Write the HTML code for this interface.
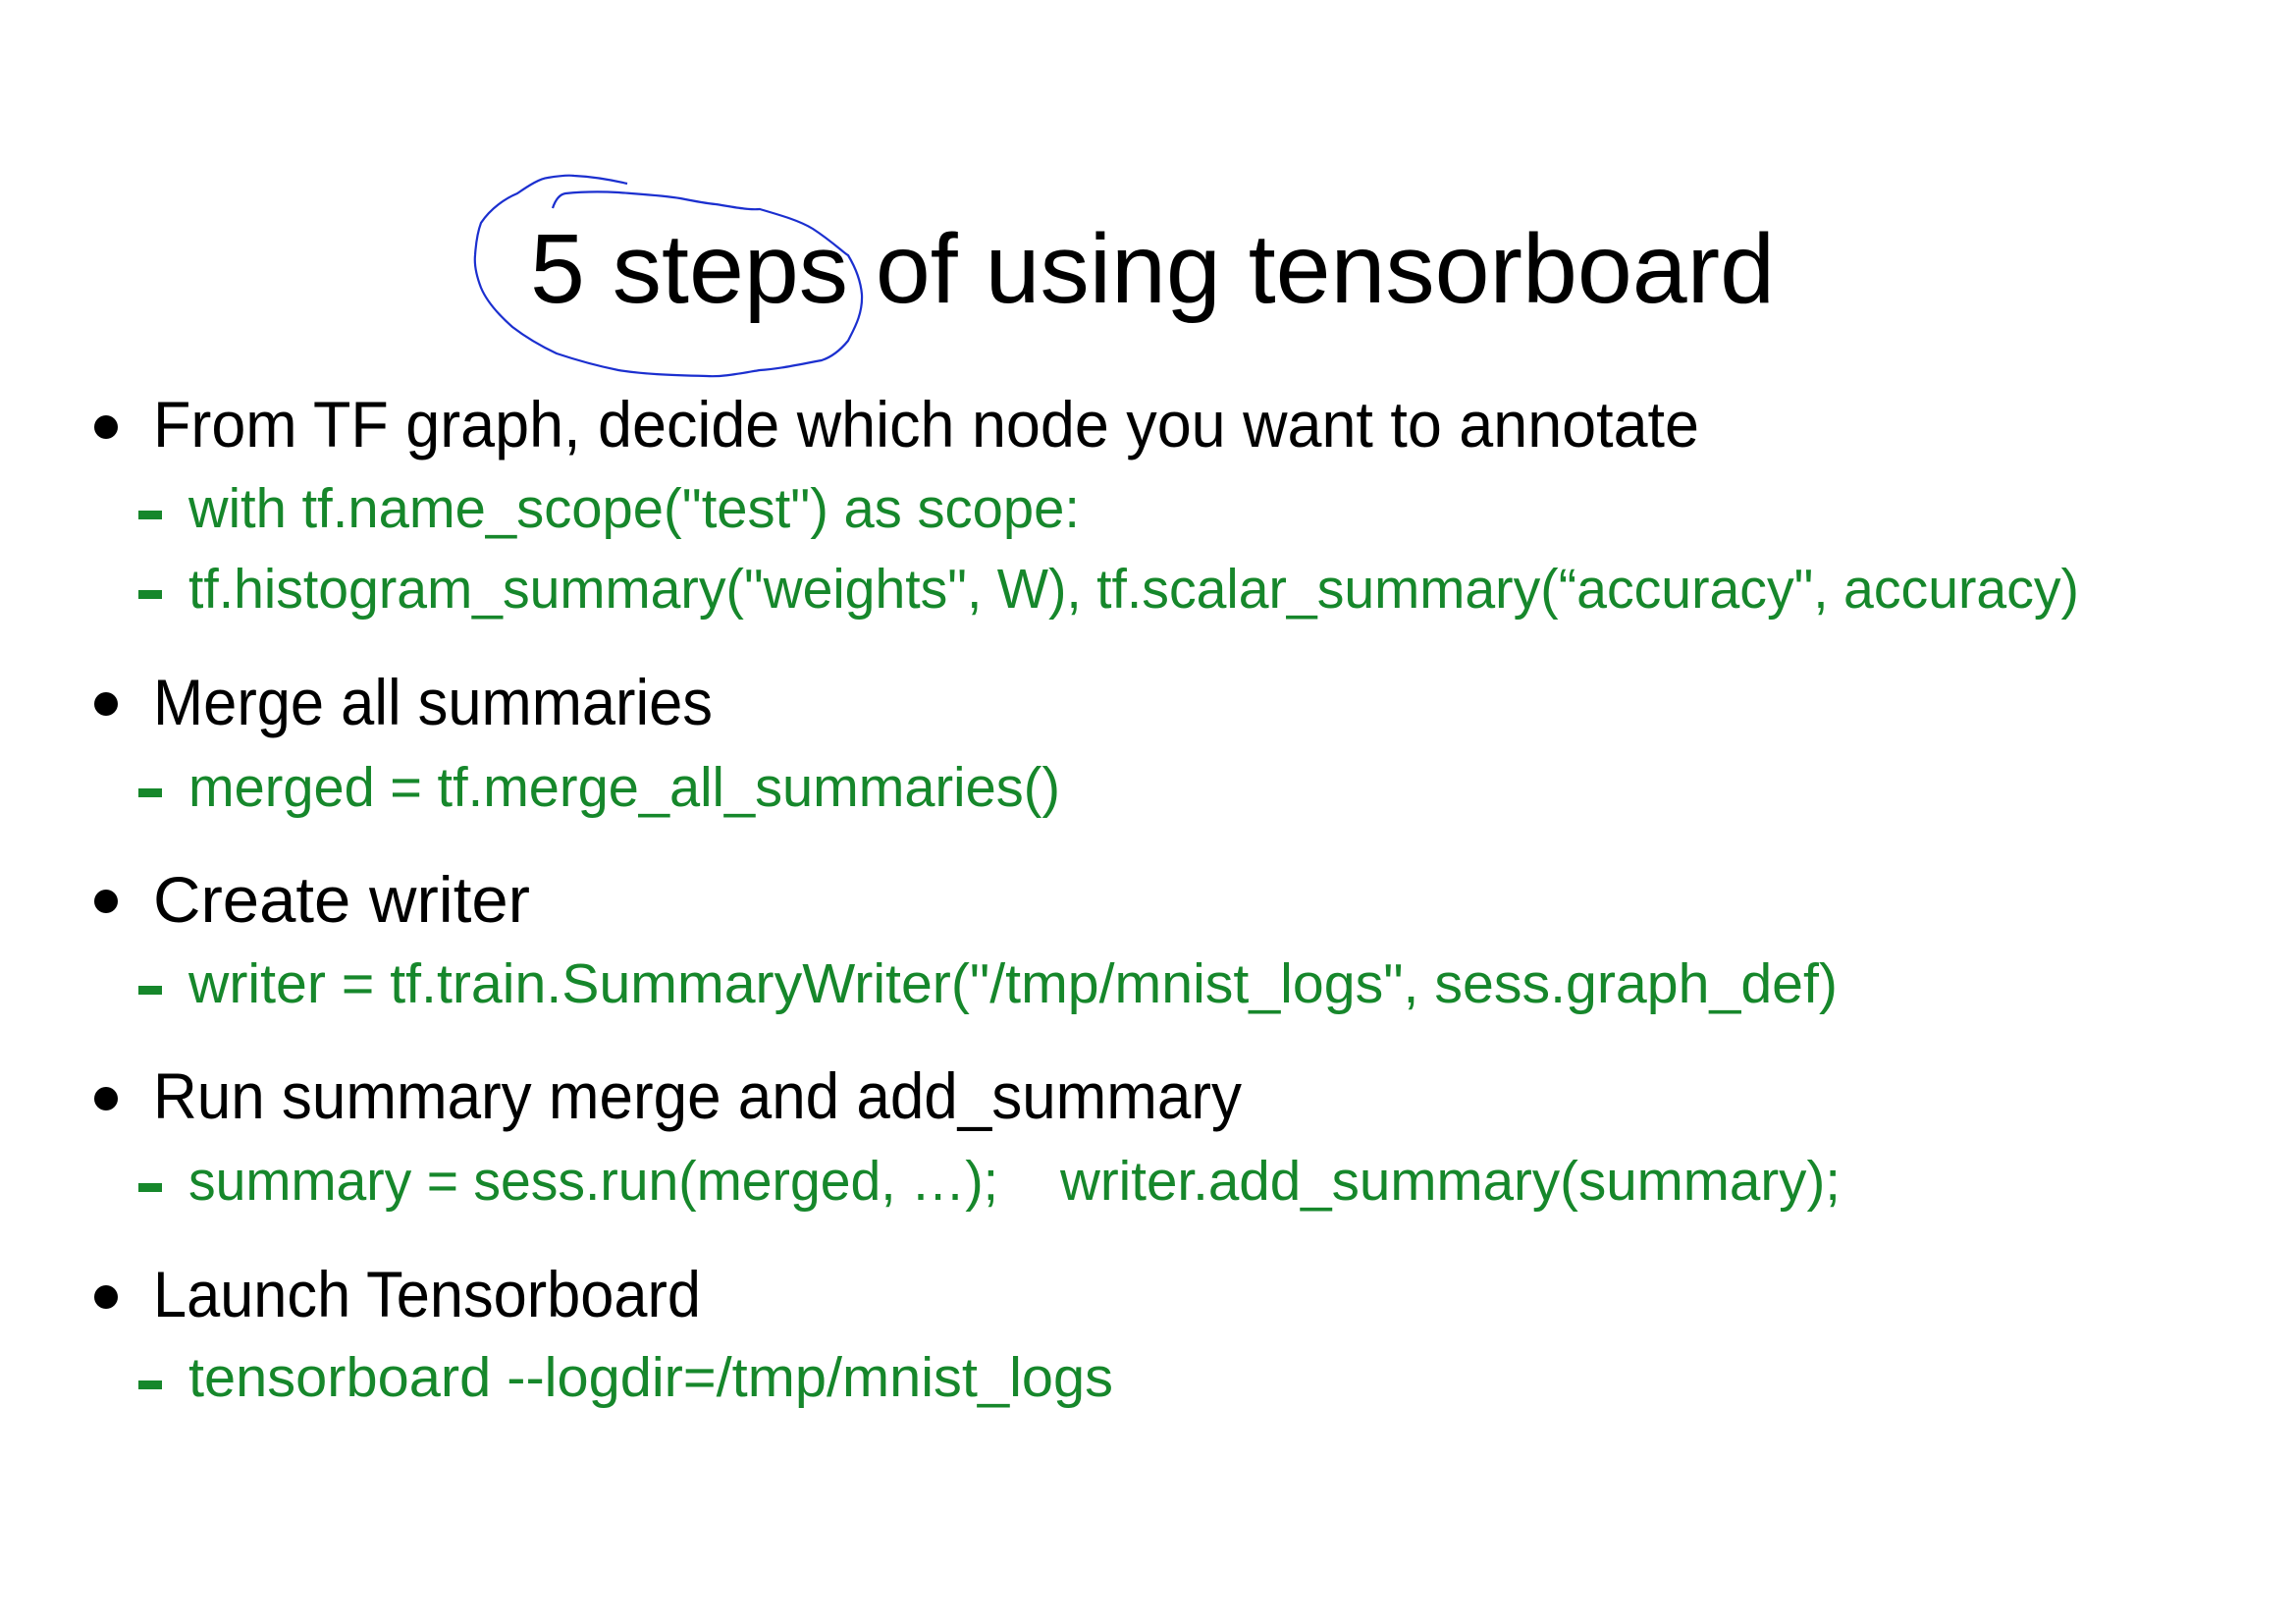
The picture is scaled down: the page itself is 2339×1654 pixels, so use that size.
<!DOCTYPE html>
<html><head><meta charset="utf-8"><style>
html,body{margin:0;padding:0;background:#fff;width:2339px;height:1654px;overflow:hidden}
svg{display:block}
text{font-family:"Liberation Sans",sans-serif}
.b{fill:#000;font-size:66px}
.g{fill:#16872b;font-size:57px}
</style></head><body>
<svg width="2339" height="1654" viewBox="0 0 2339 1654" xmlns="http://www.w3.org/2000/svg">
<text x="540" y="308" font-size="100" fill="#000" textLength="1268" lengthAdjust="spacingAndGlyphs">5 steps of using tensorboard</text>
<path d="M563,212 C566,203 570,198 576,197 C595,195 612,195 630,196 C655,198 675,199 693,202 C708,205 718,207 729,208 C748,211 762,214 774,213 C798,220 815,225 828,233 C848,246 860,258 864,260 C873,275 877,288 878,300 C879,320 870,335 864,347 C855,358 846,364 837,367 C810,372 792,376 774,377 C750,381 735,384 720,383 C680,382 655,381 630,377 C605,372 585,366 567,360 C550,352 535,343 522,333 C505,318 495,305 490,293 C485,280 483,270 484,260 C485,245 487,235 490,227 C500,212 515,202 527,197 C540,188 550,182 558,181 C570,179 578,178 585,179 C605,180 622,183 639,187" fill="none" stroke="#1b2fcf" stroke-width="2.2"/>
<g fill="#000"><circle cx="108" cy="435" r="12"/><circle cx="108" cy="717" r="12"/><circle cx="108" cy="918" r="12"/><circle cx="108" cy="1119" r="12"/><circle cx="108" cy="1321" r="12"/></g>
<g fill="#16872b"><rect x="141" y="520" width="24" height="9"/><rect x="141" y="601" width="24" height="9"/><rect x="141" y="803" width="24" height="9"/><rect x="141" y="1004" width="24" height="9"/><rect x="141" y="1205" width="24" height="9"/><rect x="141" y="1406" width="24" height="9"/></g>
<text class="b" x="156" y="455" textLength="1575" lengthAdjust="spacingAndGlyphs">From TF graph, decide which node you want to annotate</text>
<text class="g" x="192" y="537" textLength="908" lengthAdjust="spacingAndGlyphs">with tf.name_scope("test") as scope:</text>
<text class="g" x="192" y="619" textLength="1926" lengthAdjust="spacingAndGlyphs">tf.histogram_summary("weights", W), tf.scalar_summary(“accuracy", accuracy)</text>
<text class="b" x="156" y="738" textLength="570" lengthAdjust="spacingAndGlyphs">Merge all summaries</text>
<text class="g" x="192" y="821" textLength="888" lengthAdjust="spacingAndGlyphs">merged = tf.merge_all_summaries()</text>
<text class="b" x="156" y="939" textLength="384" lengthAdjust="spacingAndGlyphs">Create writer</text>
<text class="g" x="192" y="1021" textLength="1680" lengthAdjust="spacingAndGlyphs">writer = tf.train.SummaryWriter("/tmp/mnist_logs", sess.graph_def)</text>
<text class="b" x="156" y="1139" textLength="1109" lengthAdjust="spacingAndGlyphs">Run summary merge and add_summary</text>
<text class="g" x="192" y="1222" textLength="825" lengthAdjust="spacingAndGlyphs">summary = sess.run(merged, …);</text>
<text class="g" x="1080" y="1222" textLength="795" lengthAdjust="spacingAndGlyphs">writer.add_summary(summary);</text>
<text class="b" x="156" y="1341" textLength="558" lengthAdjust="spacingAndGlyphs">Launch Tensorboard</text>
<text class="g" x="192" y="1422" textLength="942" lengthAdjust="spacingAndGlyphs">tensorboard --logdir=/tmp/mnist_logs</text>
</svg>
</body></html>
